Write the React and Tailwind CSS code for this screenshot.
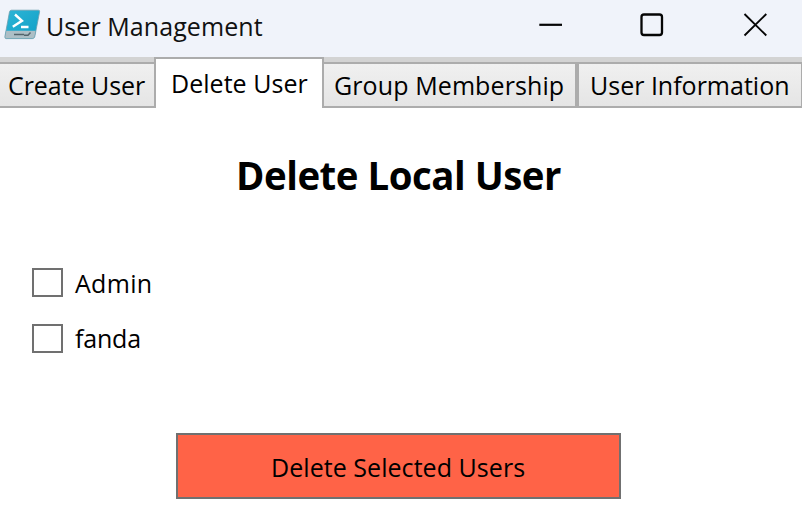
const textBase = "block whitespace-nowrap leading-none";

function PowerShellIcon() {
  return (
    <svg width="38" height="32" viewBox="0 0 38 32" className="shrink-0">
      <defs>
        <linearGradient id="ps" x1="0" y1="0" x2="1" y2="1">
          <stop offset="0" stopColor="#2eb5d6" />
          <stop offset="1" stopColor="#0f9fc6" />
        </linearGradient>
      </defs>
      <path d="M7.400 1.200H34.500Q36 1.200 35.600 2.800L30.800 27.500Q30.300 29.600 28.400 29.600H2.200Q.5 29.600 .9 27.500L5.500 2.800Q5.900 1.200 7.400 1.200Z" fill="url(#ps)" />
      <path d="M2 21.800H31.900L30.800 27.500Q30.300 29.600 28.400 29.600H2.200Q.5 29.600 .9 27.500Z" fill="#adbfc6" />
      <path d="M7.400 1.200H34.500Q36 1.200 35.600 2.800L30.800 27.500Q30.300 29.600 28.400 29.600H2.200Q.5 29.600 .9 27.500L5.500 2.800Q5.900 1.200 7.400 1.200Z" fill="none" stroke="#6d9fb0" strokeWidth=".8" />
      <path d="M11 5.500L18 11.800L8.800 17.800M17 18H24.500" fill="none" stroke="#fff" strokeWidth="2.400" />
      <path d="M10 25.500H20M20 26.300H24L26.500 23.500" fill="none" stroke="#53646b" strokeWidth="1.500" />
    </svg>
  );
}

export default function App() {
  return (
    <div className="flex h-[526px] w-[802px] flex-col overflow-hidden bg-white font-['Open_Sans','Noto_Sans',sans-serif] text-[25px] text-black">
      <header className="flex h-[57px] shrink-0 bg-[#f0f3fa]">
        <div className="pt-[9px] pl-[4px]"><PowerShellIcon /></div>
        <h1 className={textBase + " w-[484px] pt-[14px] pl-[4px] text-[#111] tracking-[0.08px]"}>User Management</h1>
        <div className="flex shrink-0 pt-[13px]">
          <svg width="276" height="24" viewBox="526 13 276 24" fill="none" stroke="#050505">
            <path d="M539.300 24.800H562" strokeWidth="2.200" />
            <rect x="641.500" y="14.500" width="20.500" height="20.500" rx="2.500" strokeWidth="2.300" />
            <path d="M744.500 14L766.300 35.500M766.300 14L744.500 35.500" strokeWidth="1.900" />
          </svg>
        </div>
      </header>

      <nav className="flex h-[51px] shrink-0 items-end bg-[#d3d3d3]">
        <div className="h-[46px] w-[154px] border-y-2 border-[#acacac] bg-linear-to-b from-[#f0f0f0] to-[#e5e5e5] pt-[9px] pl-[8px]">
          <span className={textBase + " tracking-[-0.05px]"}>Create User</span>
        </div>
        <div className="h-[51px] w-[170px] border-x-2 border-t-2 border-[#acacac] bg-white pt-[12px] pl-[15px]">
          <span className={textBase + " tracking-[0.03px]"}>Delete User</span>
        </div>
        <div className="h-[46px] w-[253px] border-y-2 border-r-2 border-[#acacac] bg-linear-to-b from-[#f0f0f0] to-[#e5e5e5] pt-[9px] pl-[10px]">
          <span className={textBase + " tracking-[0.1px]"}>Group Membership</span>
        </div>
        <div className="h-[46px] w-[225px] border-y-2 border-r border-l-2 border-[#acacac] bg-linear-to-b from-[#f0f0f0] to-[#e5e5e5] pt-[9px] pl-[11px]">
          <span className={textBase + " tracking-[0px]"}>User Information</span>
        </div>
      </nav>

      <main className="flex flex-col">
        <h2 className={textBase + " ml-[236px] h-[160px] origin-left scale-x-[0.96] pt-[47px] text-[40px] font-bold tracking-[-0.5px]"}>Delete Local User</h2>
        <label className="flex h-[56px] pl-[32px]">
          <span className="h-[29px] w-[31px] border-2 border-[#707070] bg-white" />
          <span className={textBase + " pt-[3px] pl-[12px] tracking-[0.3px]"}>Admin</span>
        </label>
        <label className="flex h-[109px] pl-[32px]">
          <span className="h-[29px] w-[31px] border-2 border-[#707070] bg-white" />
          <span className={textBase + " pt-[2px] pl-[12px] tracking-[-0.2px]"}>fanda</span>
        </label>
        <button className="ml-[176px] h-[66px] w-[445px] border-2 border-[#707070] bg-[#ff6347] pt-[2px] pl-[93px] text-left">
          <span className={textBase + " tracking-[0.05px]"}>Delete Selected Users</span>
        </button>
      </main>
    </div>
  );
}
